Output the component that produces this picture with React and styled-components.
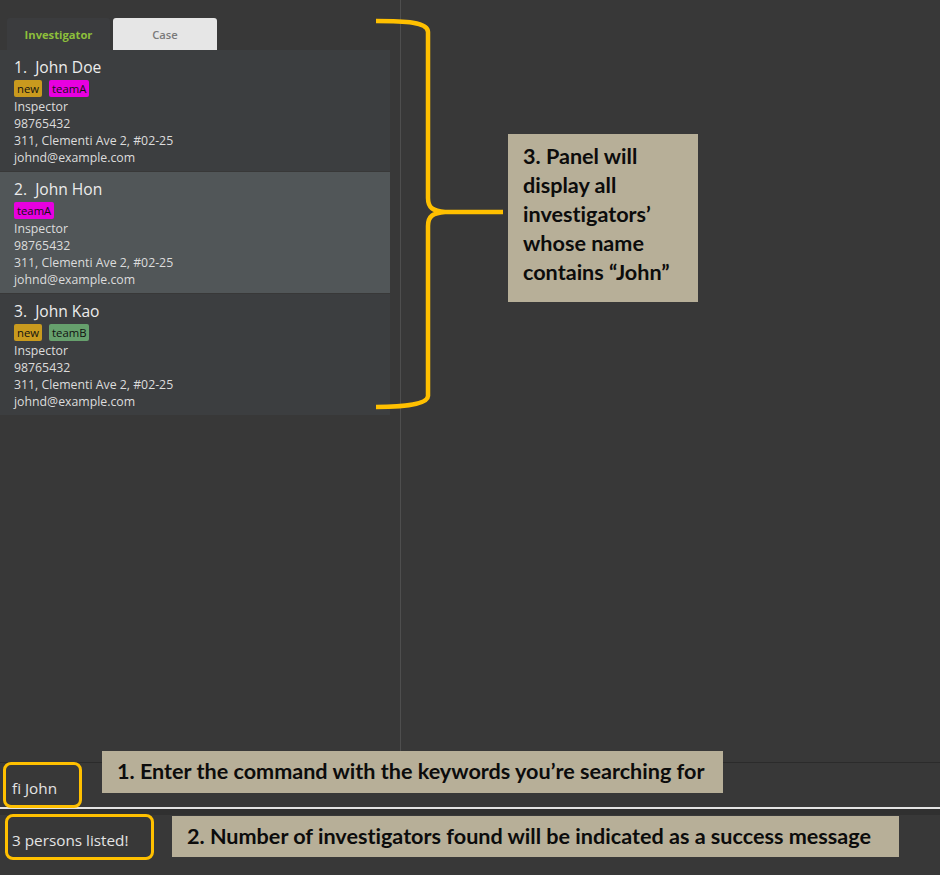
import styled, { createGlobalStyle } from "styled-components";

const persons = [
  { id: 1, name: "John Doe", tags: ["new", "teamA"] },
  { id: 2, name: "John Hon", tags: ["teamA"], selected: true },
  { id: 3, name: "John Kao", tags: ["new", "teamB"] },
];

const tagColours = {
  new: "#c99a1e",
  teamA: "#e800e0",
  teamB: "#66a06d",
};

function PersonCard(props) {
  return (
    <Card selected={props.selected}>
      <Name>
        {props.id}.&nbsp; {props.name}
      </Name>
      <Tags>
        {props.tags.map((t) => (
          <Tag key={t} colour={tagColours[t]}>
            {t}
          </Tag>
        ))}
      </Tags>
      <Detail>Inspector</Detail>
      <Detail>98765432</Detail>
      <Detail>311, Clementi Ave 2, #02-25</Detail>
      <Detail>johnd@example.com</Detail>
    </Card>
  );
}

function Brace() {
  return (
    <BraceSvg width="140" height="400" viewBox="370 10 140 400">
      <path
        d="M376 21 C 405 21, 428 22, 428 32 L 428 198 C 428 208, 433 211, 445 212 L 503 212 M 445 212 C 433 213, 428 216, 428 226 L 428 396 C 428 404, 405 407, 376 407"
        fill="none"
        stroke="#ffc000"
        strokeWidth="4.5"
      />
    </BraceSvg>
  );
}

export default function App() {
  return (
    <Screen>
      <GlobalStyle />
      <Main>
        <LeftPane>
          <TabBar>
            <Tab active>Investigator</Tab>
            <Tab>Case</Tab>
          </TabBar>
          <List>
            {persons.map((p) => (
              <PersonCard key={p.id} {...p} />
            ))}
          </List>
        </LeftPane>
        <RightPane />
      </Main>
      <CommandBar>
        <Highlight>fi John</Highlight>
      </CommandBar>
      <ResultBar>
        <Highlight wide>3 persons listed!</Highlight>
      </ResultBar>

      <Brace />
      <Callout style={{ left: 508, top: 134, width: 190, height: 168 }} multi>
        3. Panel will
        <br />
        display all
        <br />
        investigators’
        <br />
        whose name
        <br />
        contains “John”
      </Callout>
      <Callout style={{ left: 102, top: 751, width: 621, height: 42 }}>
        1. Enter the command with the keywords you’re searching for
      </Callout>
      <Callout style={{ left: 172, top: 816, width: 727, height: 41 }}>
        2. Number of investigators found will be indicated as a success message
      </Callout>
    </Screen>
  );
}

const GlobalStyle = createGlobalStyle`
  body {
    margin: 0;
    background: #383838;
    font-family: "Open Sans", "Noto Sans", sans-serif;
  }
`;

const Screen = styled.div`
  position: relative;
  width: 940px;
  height: 875px;
  background: #383838;
  display: flex;
  flex-direction: column;
  overflow: hidden;
`;

const Main = styled.div`
  height: 762px;
  display: grid;
  grid-template-columns: 401px 1fr;
`;

const LeftPane = styled.div`
  border-right: 1px solid #4e4e4e;
  padding-top: 18px;
  display: flex;
  flex-direction: column;
`;

const RightPane = styled.div``;

const TabBar = styled.div`
  display: flex;
  padding-left: 7px;
  gap: 3px;
`;

const Tab = styled.div`
  width: ${(p) => (p.active ? "103px" : "104px")};
  height: 32px;
  display: flex;
  align-items: center;
  justify-content: center;
  font-size: 11.2px;
  font-weight: ${(p) => (p.active ? 700 : 600)};
  color: ${(p) => (p.active ? "#8dbf3b" : "#7a7a7a")};
  background: ${(p) => (p.active ? "#3b3c3e" : "#e6e6e6")};
  border-radius: 3px 3px 0 0;
`;

const List = styled.div`
  width: 390px;
  display: flex;
  flex-direction: column;
  gap: 1px;
`;

const Card = styled.div`
  height: 121px;
  box-sizing: border-box;
  padding: 7px 14px 0;
  background: ${(p) => (p.selected ? "#515658" : "#3c3e40")};
`;

const Name = styled.div`
  font-size: 15.6px;
  line-height: 21px;
  color: #ececec;
`;

const Tags = styled.div`
  display: flex;
  gap: 7px;
  margin: 2px 0 1px;
`;

const Tag = styled.span`
  font-size: 11.3px;
  line-height: 17px;
  padding: 0 3px;
  border-radius: 2px;
  color: #111;
  background: ${(p) => p.colour};
`;

const Detail = styled.div`
  font-size: 12.3px;
  line-height: 17px;
  color: #dcdcdc;
`;

const CommandBar = styled.div`
  height: 44px;
  border-top: 1px solid #2b2b2b;
  border-bottom: 2px solid #e4e4e4;
  display: flex;
  align-items: center;
`;

const ResultBar = styled.div`
  flex: 1;
  border-top: 6px solid #303030;
  display: flex;
  align-items: flex-start;
`;

const Highlight = styled.div`
  box-sizing: border-box;
  height: 46px;
  margin-left: ${(p) => (p.wide ? "5px" : "3px")};
  margin-top: ${(p) => (p.wide ? "-1px" : "0")};
  padding: 6px 22px 0 ${(p) => (p.wide ? "4px" : "6px")};
  border: 3px solid #ffc000;
  border-radius: 8px;
  display: flex;
  align-items: center;
  font-size: 15.3px;
  color: #e4e4e4;
  font-variant-ligatures: none;
`;

const BraceSvg = styled.svg`
  position: absolute;
  left: 370px;
  top: 10px;
`;

const Callout = styled.div`
  position: absolute;
  box-sizing: border-box;
  background: #b7af98;
  color: #0c0c0c;
  font-family: Lato, "Open Sans", sans-serif;
  font-weight: 700;
  font-size: 21.6px;
  font-variant-ligatures: none;
  line-height: ${(p) => (p.multi ? "29px" : "1")};
  padding: ${(p) => (p.multi ? "8px 0 0 15px" : "0 0 0 15px")};
  display: ${(p) => (p.multi ? "block" : "flex")};
  align-items: center;
  white-space: nowrap;
`;
